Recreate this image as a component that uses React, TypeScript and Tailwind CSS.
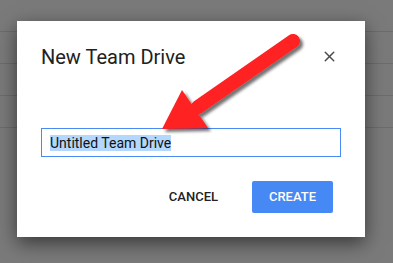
import { X } from "lucide-react";

const font = { fontFamily: "Roboto, 'Liberation Sans', sans-serif" };

export default function App() {
  return (
    <div className="relative h-[263px] w-[393px] overflow-hidden bg-[#7a7a7a]" style={font}>
      {/* page behind the dialog */}
      <div className="flex flex-col">
        <div className="h-[32px] border-b border-[#6c6c6c]" />
        <div className="h-[32px] border-b border-[#6c6c6c]" />
        <div className="h-[32px] border-b border-[#6c6c6c]" />
        <div className="h-[32px] border-b border-[#6c6c6c]" />
      </div>

      {/* dialog */}
      <div className="absolute left-[17px] top-[21px] flex h-[216px] w-[348px] flex-col bg-white pl-[24px] pr-[24px] pt-[22px] shadow-[0_6px_18px_rgba(0,0,0,0.55)]">
        <div className="flex items-center justify-between">
          <h2 className="text-[20px] leading-[28px] text-[#212121]">New Team Drive</h2>
          <X className="mr-[3px] mt-[-1px] h-[17px] w-[17px] text-[#4a4a4a]" strokeWidth={2} />
        </div>

        <div className="mt-[57px] flex h-[29px] items-center border border-[#4a8af4] pl-[8px]">
          <span className="bg-[#b3d7fe] text-[14px] leading-[16px] text-[#111]">Untitled Team Drive</span>
        </div>

        <div className="mt-[24px] flex items-center justify-end gap-[34px] pr-[8px]">
          <button className="text-[13px] font-medium text-[#212121]">CANCEL</button>
          <button className="h-[32px] w-[81px] rounded-[2px] bg-[#4688f4] text-[13px] font-medium text-white">
            CREATE
          </button>
        </div>
      </div>

      {/* red annotation arrow */}
      <svg className="absolute left-0 top-0" width="393" height="263" viewBox="0 0 393 263">
        <defs>
          <filter id="sh" x="-20%" y="-20%" width="140%" height="140%">
            <feDropShadow dx="3" dy="3" stdDeviation="1.5" floodColor="#000" floodOpacity="0.55" />
          </filter>
        </defs>
        <g filter="url(#sh)">
          <line x1="293" y1="41" x2="198" y2="107" stroke="#fe2020" strokeWidth="14" strokeLinecap="round" />
          <polygon points="162,129 182,90 208,128" fill="#fe2020" />
        </g>
      </svg>
    </div>
  );
}
